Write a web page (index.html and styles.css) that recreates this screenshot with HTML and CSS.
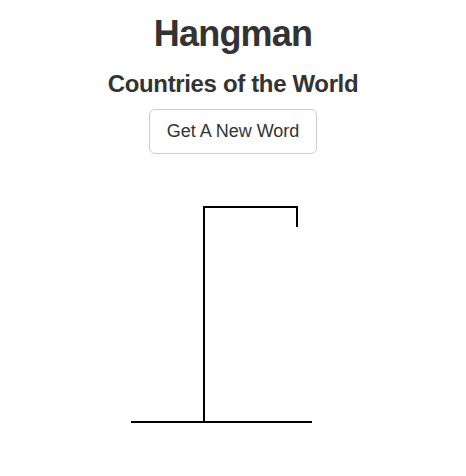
FILE: index.html
```html
<!DOCTYPE html>
<html>
<head>
<meta charset="utf-8">
<title>Hangman</title>
<link rel="stylesheet" href="styles.css">
</head>
<body>
<div class="app">
  <h1 class="title">Hangman</h1>
  <h3 class="category">Countries of the World</h3>
  <button class="btn">Get A New Word</button>
  <svg class="gallows" width="466" height="270" viewBox="0 0 466 270">
    <line x1="131" y1="262" x2="312" y2="262" stroke="#000" stroke-width="2"/>
    <polyline points="204,262 204,47 297,47 297,67" fill="none" stroke="#000" stroke-width="2" stroke-linejoin="miter"/>
  </svg>
</div>
</body>
</html>
```
FILE: styles.css
```css
html, body {
  margin: 0;
  padding: 0;
  background: #fff;
}
body {
  font-family: "Liberation Sans", Arial, sans-serif;
  color: #333;
}
.app {
  display: flex;
  flex-direction: column;
  align-items: center;
}
.title {
  margin: 14px 0 0;
  font-size: 36px;
  line-height: 39.6px;
  font-weight: bold;
  letter-spacing: -0.8px;
}
.category {
  margin: 17px 0 0;
  font-size: 24px;
  line-height: 26.4px;
  font-weight: bold;
  letter-spacing: -0.35px;
}
.btn {
  margin-top: 12px;
  font-family: "Liberation Sans", Arial, sans-serif;
  font-size: 18px;
  line-height: 23px;
  padding: 10px 17px;
  color: #333;
  background: #fff;
  border: 1px solid #ccc;
  border-radius: 6px;
}
.gallows {
  display: block;
  align-self: flex-start;
  margin-top: 6px;
}
```
